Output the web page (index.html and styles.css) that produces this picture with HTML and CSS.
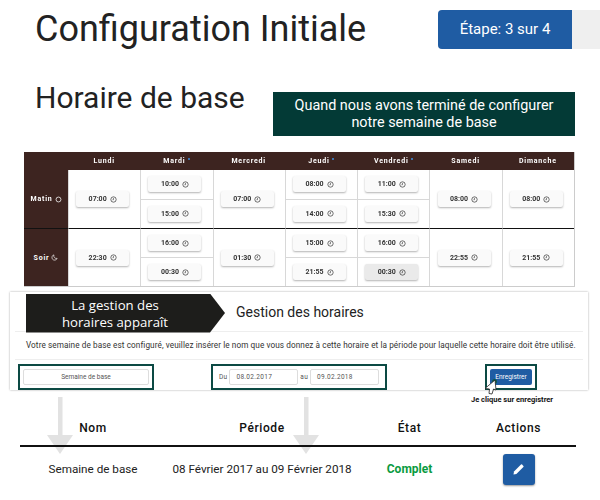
FILE: index.html
```html
<!DOCTYPE html>
<html lang="fr">
<head>
    <meta charset="UTF-8">
    <title>Configuration Initiale</title>
    <link rel="stylesheet" href="styles.css">
</head>
<body>
    <svg width="0" height="0" class="defs">
        <symbol id="clock" viewBox="0 0 12 12">
            <circle cx="6" cy="6" r="4.6" fill="none" stroke="currentColor" stroke-width="1.2"/>
            <path d="M6 3.4V6.4H4.2" fill="none" stroke="currentColor" stroke-width="1"/>
        </symbol>
    </svg>

    <!-- Top -->
    <div class="top">
        <h1>Configuration Initiale</h1>
        <div class="progress"><div class="progress-bar">Étape: 3 sur 4</div></div>
    </div>

    <div class="sub">
        <h2>Horaire de base</h2>
        <div class="note">Quand nous avons terminé de configurer<br>notre semaine de base</div>
    </div>

    <!-- Week grid -->
    <div class="week">
        <div class="head"></div>
        <div class="head">Lundi</div>
        <div class="head">Mardi<i class="dot"></i></div>
        <div class="head">Mercredi</div>
        <div class="head">Jeudi<i class="dot"></i></div>
        <div class="head">Vendredi<i class="dot"></i></div>
        <div class="head">Samedi</div>
        <div class="head">Dimanche</div>

        <div class="label">Matin
            <svg class="label-icon" viewBox="0 0 12 12"><circle cx="6" cy="6" r="4.2" fill="none" stroke="currentColor" stroke-width="1.3"/></svg>
        </div>
        <div class="day"><div class="slot"><span class="time">07:00 <svg><use href="#clock"/></svg></span></div></div>
        <div class="day"><div class="slot"><span class="time">10:00 <svg><use href="#clock"/></svg></span></div><div class="slot"><span class="time">15:00 <svg><use href="#clock"/></svg></span></div></div>
        <div class="day"><div class="slot"><span class="time">07:00 <svg><use href="#clock"/></svg></span></div></div>
        <div class="day"><div class="slot"><span class="time">08:00 <svg><use href="#clock"/></svg></span></div><div class="slot"><span class="time">14:00 <svg><use href="#clock"/></svg></span></div></div>
        <div class="day"><div class="slot"><span class="time">11:00 <svg><use href="#clock"/></svg></span></div><div class="slot"><span class="time">15:30 <svg><use href="#clock"/></svg></span></div></div>
        <div class="day"><div class="slot"><span class="time">08:00 <svg><use href="#clock"/></svg></span></div></div>
        <div class="day"><div class="slot"><span class="time">08:00 <svg><use href="#clock"/></svg></span></div></div>

        <div class="label evening">Soir
            <svg class="label-icon" viewBox="0 0 12 12"><path d="M5 1.5A4.6 4.6 0 1 0 10.5 7.5 4.6 4.6 0 0 1 5 1.5Z" fill="none" stroke="currentColor" stroke-width="1.1"/></svg>
        </div>
        <div class="day evening"><div class="slot"><span class="time">22:30 <svg><use href="#clock"/></svg></span></div></div>
        <div class="day evening"><div class="slot"><span class="time">16:00 <svg><use href="#clock"/></svg></span></div><div class="slot"><span class="time">00:30 <svg><use href="#clock"/></svg></span></div></div>
        <div class="day evening"><div class="slot"><span class="time">01:30 <svg><use href="#clock"/></svg></span></div></div>
        <div class="day evening"><div class="slot"><span class="time">15:00 <svg><use href="#clock"/></svg></span></div><div class="slot"><span class="time">21:55 <svg><use href="#clock"/></svg></span></div></div>
        <div class="day evening"><div class="slot"><span class="time">16:00 <svg><use href="#clock"/></svg></span></div><div class="slot"><span class="time pressed">00:30 <svg><use href="#clock"/></svg></span></div></div>
        <div class="day evening"><div class="slot"><span class="time">22:55 <svg><use href="#clock"/></svg></span></div></div>
        <div class="day evening"><div class="slot"><span class="time">21:55 <svg><use href="#clock"/></svg></span></div></div>
    </div>

    <!-- Management panel -->
    <div class="panel">
        <div class="panel-head">
            <div class="banner"><span>La gestion des<br>horaires apparaît</span></div>
            <h3>Gestion des horaires</h3>
        </div>
        <p class="panel-text">Votre semaine de base est configuré, veuillez insérer le nom que vous donnez à cette horaire et la période pour laquelle cette horaire doit être utilisé.</p>
        <div class="panel-form">
            <div class="mark mark-name"><div class="field field-name">Semaine de base</div></div>
            <div class="mark mark-dates">
                <span>Du</span><div class="field">08.02.2017</div>
                <span>au</span><div class="field">09.02.2018</div>
            </div>
            <div class="mark mark-save"><div class="save">Enregistrer</div></div>
        </div>
    </div>

    <p class="click-note">Je clique sur enregistrer</p>

    <!-- Result table -->
    <table class="result">
        <thead>
            <tr><th class="c-name">Nom</th><th class="c-period">Période</th><th class="c-state">État</th><th>Actions</th></tr>
        </thead>
        <tbody>
            <tr>
                <td>Semaine de base</td>
                <td>08 Février 2017 au 09 Février 2018</td>
                <td class="complete">Complet</td>
                <td>
                    <span class="edit">
                        <svg viewBox="0 0 14 14" width="14" height="14"><path d="M2 9.6 9 2.6a.8.8 0 0 1 1.1 0l1.3 1.3a.8.8 0 0 1 0 1.1l-7 7L1.5 12.5Z" fill="#fff"/></svg>
                    </span>
                </td>
            </tr>
        </tbody>
    </table>

    <!-- Overlays -->
    <svg class="arrow arrow-a" viewBox="0 0 26 58"><path d="M11 0H15.500V38L26 38 13 57 0 38 11 38Z" fill="#e2e2e2"/></svg>
    <svg class="arrow arrow-b" viewBox="0 0 26 58"><path d="M11 0H15.500V38L26 38 13 57 0 38 11 38Z" fill="#e2e2e2"/></svg>
    <svg class="cursor" viewBox="0 0 14 16"><circle cx="10.500" cy="2.500" r="2.500" fill="#0c5a4a"/><path d="M11 1 12 11 9.500 10 8 15 5 14.500 5.500 10 1 9.500Z" fill="#fff" stroke="#222" stroke-width=".8"/></svg>
</body>
</html>
```

FILE: styles.css
```css
body {
    margin: 0;
    font-family: Roboto, sans-serif;
    color: #222;
    background-color: white;
    position: relative;
    height: 500px;
    overflow: hidden;
}
.defs {
    position: absolute;
}
.top {
    display: flex;
    justify-content: space-between;
    padding-top: 10px;
    padding-left: 35px;
    height: 39px;
}
h1 {
    margin: 0;
    font-size: 36px;
    font-weight: 400;
    line-height: 39px;
}
.progress {
    width: 162px;
    height: 39px;
    background-color: #efefef;
    border-radius: 4px 0 0 4px;
}
.progress-bar {
    width: 134px;
    height: 39px;
    line-height: 39px;
    text-align: center;
    font-size: 15px;
    color: white;
    background-color: #1f5ca3;
    border-radius: 4px 0 0 4px;
}
.sub {
    display: flex;
    padding-left: 35px;
    padding-top: 31px;
    height: 75px;
    box-sizing: border-box;
}
h2 {
    margin: 0;
    font-size: 30px;
    font-weight: 400;
    line-height: 36px;
    width: 238px;
}
.note {
    width: 302px;
    height: 44px;
    margin-top: 12px;
    padding-top: 5px;
    box-sizing: border-box;
    background-color: #033a36;
    color: white;
    font-size: 14.4px;
    line-height: 17px;
    text-align: center;
}

/* week */
.week {
    display: grid;
    grid-template-columns: 44px repeat(7, 1fr);
    grid-template-rows: 18px 58px 58px;
    width: 551px;
    margin-left: 24px;
    margin-top: 28px;
    border-bottom: 1px solid #ccc;
    border-right: 1px solid #ccc;
    box-sizing: border-box;
    height: 135px;
    filter: blur(.45px);
}
.head {
    background-color: #3d2420;
    color: white;
    font-size: 7px;
    font-weight: 700;
    letter-spacing: .8px;
    display: flex;
    align-items: center;
    justify-content: center;
}
.dot {
    width: 2px;
    height: 2px;
    margin: -5px 0 0 2px;
    background-color: #3b8ee0;
    border-radius: 50%;
}
.label {
    background-color: #3d2420;
    color: white;
    font-size: 7px;
    font-weight: 700;
    letter-spacing: .8px;
    display: flex;
    align-items: center;
    justify-content: center;
    gap: 2px;
}
.label-icon {
    width: 7px;
    height: 7px;
}
.evening {
    border-top: 1px solid #111;
}
.day {
    display: flex;
    flex-direction: column;
    border-left: 1px solid #d8d8d8;
}
.slot {
    flex: 1;
    display: flex;
    align-items: center;
    justify-content: center;
    padding-right: 4px;
}
.slot + .slot {
    border-top: 1px solid #d8d8d8;
}
.time {
    width: 53px;
    height: 16px;
    display: flex;
    align-items: center;
    justify-content: center;
    gap: 3px;
    background-color: #fafafa;
    border-radius: 2px;
    box-shadow: 0 1px 2px rgba(0,0,0,.3);
    font-size: 7px;
    font-weight: 700;
    color: #333;
}
.time svg {
    width: 7px;
    height: 7px;
}
.pressed {
    background-color: #eaeaea;
}

/* panel */
.panel {
    width: 578px;
    height: 98px;
    margin-left: 10px;
    margin-top: 5px;
    box-sizing: border-box;
    background-color: white;
    box-shadow: 0 0 2px rgba(0,0,0,.35);
    padding: 0 5px;
}
.panel-head {
    display: flex;
    align-items: center;
    height: 39px;
    border-bottom: 1px solid #eee;
}
.banner {
    width: 199px;
    height: 39px;
    margin-left: 11px;
    margin-top: 3px;
    background-color: #1d1d1b;
    color: white;
    clip-path: polygon(0 0, 184px 0, 100% 50%, 184px 100%, 0 100%);
    font-family: "Open Sans", sans-serif;
    font-size: 13.2px;
    line-height: 17px;
    text-align: center;
}
.banner span {
    display: block;
    width: 178px;
    padding-top: 3px;
}
h3 {
    margin: 0 0 0 11px;
    font-size: 14px;
    font-weight: 400;
}
.panel-text {
    margin: 0;
    height: 27px;
    line-height: 27px;
    font-size: 8.2px;
    letter-spacing: .085px;
    padding-left: 11px;
    white-space: nowrap;
    color: #333;
    border-bottom: 1px solid #eee;
}
.panel-form {
    display: flex;
    padding-top: 4px;
    padding-left: 3px;
}
.mark {
    border: 2px solid #0c4a44;
    height: 26px;
    box-sizing: border-box;
    display: flex;
    align-items: center;
    font-size: 6.5px;
    color: #555;
}
.mark-name {
    width: 136px;
    padding: 0 3px;
}
.mark-dates {
    width: 176px;
    margin-left: 57px;
    padding: 0 6px;
    gap: 2px;
    letter-spacing: .3px;
}
.mark-save {
    width: 52px;
    margin-left: 98px;
    padding: 0 3px;
}
.field {
    width: 70px;
    height: 16px;
    line-height: 14px;
    border: 1px solid #ddd;
    border-radius: 2px;
    box-sizing: border-box;
    padding-left: 6px;
}
.field-name {
    width: 100%;
    padding: 0;
    text-align: center;
}
.save {
    width: 100%;
    height: 16px;
    line-height: 16px;
    text-align: center;
    color: white;
    background-color: #1f5ca3;
    border-radius: 2px;
}
.click-note {
    margin: 5px 0 0 471px;
    font-size: 7.5px;
    font-weight: 700;
    line-height: 10px;
    color: #111;
}

/* result */
.result {
    position: relative;
    z-index: 1;
    width: 556px;
    margin-left: 20px;
    margin-top: 9px;
    border-collapse: collapse;
    table-layout: fixed;
}
.result th {
    font-size: 12px;
    font-weight: 500;
    letter-spacing: .6px;
    color: #111;
    height: 27px;
    padding: 0 0 4px;
    border-bottom: 2px solid #111;
}
.c-name { width: 146px; }
.c-period { width: 192px; }
.c-state { width: 103px; }
.result td {
    font-size: 11.7px;
    text-align: center;
    height: 44px;
    padding: 0;
}
.result .complete {
    color: #0a9b3f;
    font-size: 12px;
    font-weight: 700;
}
.edit {
    display: inline-flex;
    align-items: center;
    justify-content: center;
    width: 32px;
    height: 31px;
    background-color: #1f5ca3;
    border-radius: 3px;
    box-shadow: 0 1px 2px rgba(0,0,0,.4);
}
.arrow {
    position: absolute;
    width: 26px;
    height: 58px;
    top: 397px;
}
.arrow-a { left: 47px; }
.arrow-b { left: 293px; }
.cursor {
    position: absolute;
    left: 484px;
    top: 379px;
    width: 14px;
    height: 16px;
}
```
